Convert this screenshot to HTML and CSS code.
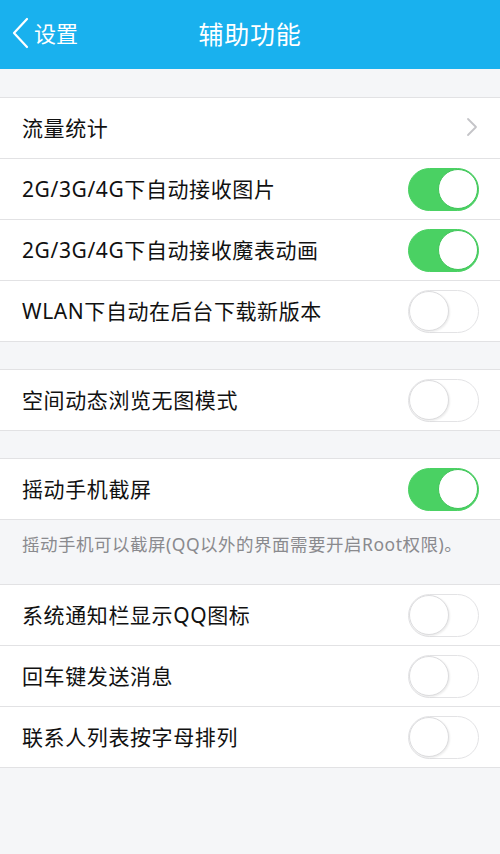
FILE: index.html
```html
<!DOCTYPE html>
<html lang="zh-CN">
<head>
<meta charset="utf-8">
<title>辅助功能</title>
<link rel="stylesheet" href="styles.css">
</head>
<body>
<header class="bar">
  <div class="back">
    <svg class="back-icon" width="18" height="32" viewBox="0 0 18 32"><path d="M16 2 L3 16 L16 30" fill="none" stroke="#fff" stroke-width="2.2" stroke-linecap="round" stroke-linejoin="round"/></svg>
    <span>设置</span>
  </div>
  <h1 class="title">辅助功能</h1>
</header>
<main class="content">
  <section class="group">
    <div class="row"><span class="label">流量统计</span>
      <svg class="chev" width="12" height="20" viewBox="0 0 12 20"><path d="M2 2 L10 10 L2 18" fill="none" stroke="#c4c4c8" stroke-width="1.8" stroke-linecap="round" stroke-linejoin="round"/></svg>
    </div>
    <div class="row"><span class="label">2G/3G/4G下自动接收图片</span><span class="toggle on"><span class="knob"></span></span></div>
    <div class="row"><span class="label">2G/3G/4G下自动接收魔表动画</span><span class="toggle on"><span class="knob"></span></span></div>
    <div class="row"><span class="label">WLAN下自动在后台下载新版本</span><span class="toggle"><span class="knob"></span></span></div>
  </section>
  <section class="group">
    <div class="row"><span class="label">空间动态浏览无图模式</span><span class="toggle"><span class="knob"></span></span></div>
  </section>
  <section class="group">
    <div class="row"><span class="label">摇动手机截屏</span><span class="toggle on"><span class="knob"></span></span></div>
  </section>
  <p class="note">摇动手机可以截屏(QQ以外的界面需要开启Root权限)。</p>
  <section class="group flush">
    <div class="row"><span class="label">系统通知栏显示QQ图标</span><span class="toggle"><span class="knob"></span></span></div>
    <div class="row"><span class="label">回车键发送消息</span><span class="toggle"><span class="knob"></span></span></div>
    <div class="row"><span class="label">联系人列表按字母排列</span><span class="toggle"><span class="knob"></span></span></div>
  </section>
</main>
</body>
</html>
```
FILE: styles.css
```css
* { box-sizing: border-box; }
html, body {
  margin: 0;
  padding: 0;
  background: #f5f6f8;
  font-family: "Noto Sans", "Noto Sans CJK SC", sans-serif;
  width: 500px;
  height: 854px;
  overflow: hidden;
}
.bar {
  height: 69px;
  background: #19b1ee;
  display: flex;
  align-items: center;
  justify-content: center;
  position: relative;
  color: #fff;
}
.back {
  position: absolute;
  left: 11px;
  top: 17px;
  display: flex;
  align-items: center;
  gap: 5px;
  font-size: 22px;
  line-height: 32px;
}
.back-icon { display: block; }
.title {
  margin: 0;
  font-size: 25px;
  font-weight: normal;
  letter-spacing: 0.8px;
  line-height: 69px;
}
.content {
  padding-top: 28px;
}
.group {
  background: #fff;
  border-top: 1px solid #e2e2e4;
  margin-bottom: 27px;
}
.group.flush { margin-bottom: 0; }
.row {
  height: 61px;
  border-bottom: 1px solid #e2e2e4;
  display: flex;
  align-items: center;
  justify-content: space-between;
  padding: 0 21px 2px 22px;
}
.label {
  font-size: 21px;
  color: #111;
  letter-spacing: 0.6px;
}
.chev { display: block; margin-right: 1px; }
.toggle {
  width: 71px;
  height: 43px;
  border-radius: 22px;
  border: 1.5px solid #e3e3e5;
  background: #fff;
  position: relative;
  display: block;
  margin-top: 2px;
}
.toggle .knob {
  position: absolute;
  top: 0;
  left: 0;
  width: 40px;
  height: 40px;
  border-radius: 50%;
  background: #fff;
  border: 1.5px solid #dcdcde;
  box-shadow: 1px 1px 2px rgba(0,0,0,0.08);
}
.toggle.on {
  background: #4ad163;
  border-color: #4ad163;
}
.toggle.on .knob {
  left: auto;
  right: 0;
  border-color: #40c559;
  box-shadow: none;
}
.note {
  margin: -27px 0 0 0;
  height: 64px;
  padding: 10px 0 0 22px;
  font-size: 17.5px;
  line-height: 28px;
  letter-spacing: 0.5px;
  color: #8a8a8e;
}
```
